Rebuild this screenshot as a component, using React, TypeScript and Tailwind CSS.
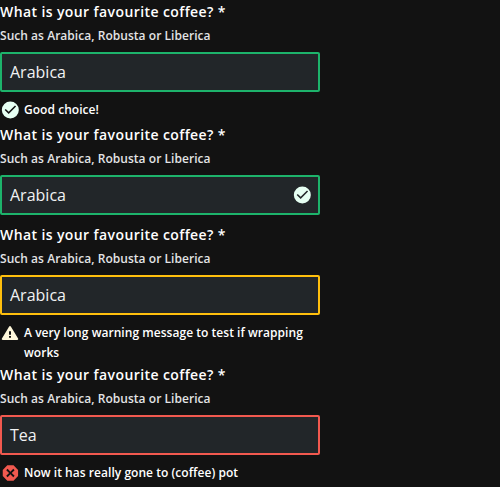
import React from "react";

type Status = "success" | "warning" | "error";

const borders: Record<Status, string> = {
  success: "border-[#1db36b]",
  warning: "border-[#ffbf0d]",
  error: "border-[#f2594f]",
};

function StatusIcon({ status }: { status: Status }) {
  if (status === "success")
    return (
      <svg viewBox="-0.4 0 24 24" className="size-5 shrink-0" fill="#e6fff3">
        <path d="M12 1.8a10.2 10.2 0 1 0 0 20.4 10.2 10.2 0 0 0 0-20.4Zm-2 15-4.8-4.8 1.3-1.3L10 14.2l7.6-7.6L18.9 7.9l-8.9 8.9Z" />
      </svg>
    );
  if (status === "warning")
    return (
      <svg viewBox="0 0 24 24" className="size-5 shrink-0" fill="#fff8db">
        <path d="M3.3 20.4h17.4c1 0 1.5-1 1-1.8L13 4.3a1.1 1.1 0 0 0-2 0L2.3 18.6c-.5.8 0 1.8 1 1.8ZM13.2 17.8h-2.4v-2.2h2.4v2.2Zm0-3.8h-2.4V9.8h2.4V14Z" />
      </svg>
    );
  return (
    <svg viewBox="-0.5 0 24 24" className="size-5 shrink-0" fill="#f2594f">
      <path d="M8.27 2.8 2.8 8.27v7.46L8.27 21.2h7.46l5.47-5.47V8.27L15.73 2.8H8.27ZM17 15.4 15.4 17 12 13.6 8.6 17 7 15.4 10.4 12 7 8.6 8.6 7 12 10.4 15.4 7 17 8.6 13.6 12 17 15.4Z" />
    </svg>
  );
}

function Field({ value, status, message, inline }: { value: string; status: Status; message?: string; inline?: boolean }) {
  return (
    <div className="w-80">
      <div className="h-6 text-sm leading-6 font-semibold tracking-[0.4px]">What is your favourite coffee? *</div>
      <div className="mb-1 h-6 text-xs leading-6 font-semibold tracking-[0.04px] text-[#e3e4e5]">Such as Arabica, Robusta or Liberica</div>
      <div className={`flex h-10 items-center justify-between rounded-xs border-2 bg-[#222629] pr-1.5 pl-2 text-base text-[#f1f2f3] ${borders[status]}`}>
        <span>{value}</span>
        {inline && <StatusIcon status={status} />}
      </div>
      {message && (
        <div className="mt-2 flex min-h-[23px] items-start gap-1 text-xs leading-5 font-semibold tracking-[0.04px]">
          <StatusIcon status={status} />
          <span>{message}</span>
        </div>
      )}
    </div>
  );
}

export default function App() {
  return (
    <main className="h-[487px] overflow-hidden bg-[#121212] font-['Open_Sans',sans-serif] text-white">
      <div className="flex flex-col">
        <Field value="Arabica" status="success" message="Good choice!" />
        <Field value="Arabica" status="success" inline />
        <div className="h-2" />
        <Field value="Arabica" status="warning" message="A very long warning message to test if wrapping works" />
        <Field value="Tea" status="error" message="Now it has really gone to (coffee) pot" />
      </div>
    </main>
  );
}
